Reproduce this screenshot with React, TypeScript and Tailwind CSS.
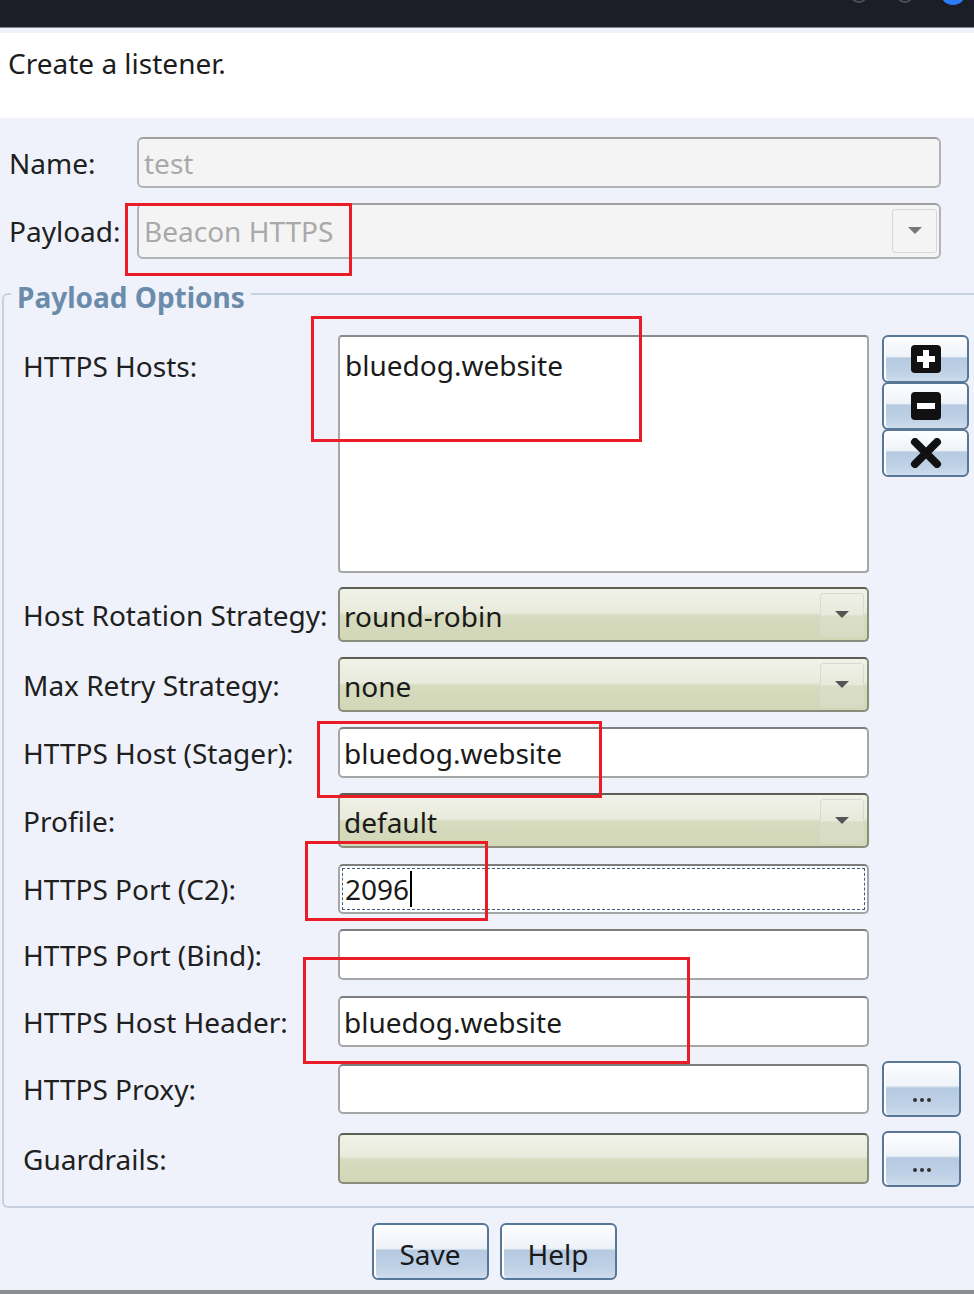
import React from "react";

const Label = ({ text }: { text: string }) => (
  <div className="w-[315px] shrink-0 whitespace-nowrap text-[28px] leading-[38px] text-[#202020]">{text}</div>
);

const Arrow = ({ color = "#555" }: { color?: string }) => (
  <svg width="14" height="8" viewBox="0 0 14 8">
    <path d="M0 0 L14 0 L7 7 Z" fill={color} />
  </svg>
);

const TextBox = ({ value, h = 51, focused = false }: { value?: string; h?: number; focused?: boolean }) => (
  <div
    className="w-[531px] shrink-0 rounded-[5px] border-2 border-[#a6a6a6] border-t-[#7e7e7e] bg-white p-[2px]"
    style={{ height: h }}
  >
    <div
      className={
        "flex h-full items-center pl-[2px] text-[28px] text-[#1a1a1a] " +
        (focused ? "border border-dashed border-[#3d5f86]" : "")
      }
    >
      {value}
      {focused && <span className="ml-[1px] h-[36px] w-[2px] bg-black" />}
    </div>
  </div>
);

const Combo = ({ value, arrow = true, h = 55 }: { value?: string; arrow?: boolean; h?: number }) => (
  <div
    className="flex w-[531px] shrink-0 items-center rounded-[5px] border-2 border-[#8a8c7c] border-t-[#5d5f55] bg-[linear-gradient(to_bottom,#f1f2e8_0%,#e9ebdd_46%,#d7dbbf_52%,#d2d7b7_100%)] pl-[4px] pr-[3px]"
    style={{ height: h }}
  >
    <span className="flex-1 pt-[2px] text-[28px] text-[#1a1a1a]">{value}</span>
    {arrow && (
      <div className="flex h-[44px] w-[44px] items-center justify-center rounded-[3px] border border-[#d9dbcc] bg-[linear-gradient(to_bottom,#eff0e6_0%,#e7e9dc_50%,#dadec6_52%,#d7dbc2_100%)]">
        <Arrow />
      </div>
    )}
  </div>
);

const BlueBtn = ({ w, h, children, className = "" }: { w: number; h: number; children?: React.ReactNode; className?: string }) => (
  <div
    className={
      "flex shrink-0 items-center justify-center rounded-[6px] border-2 border-[#587797] bg-[linear-gradient(to_bottom,#fdfeff_0%,#eef3f9_44%,#b5cae1_48%,#bfd1e6_80%,#cddcec_100%)] shadow-[inset_2px_0_0_#ffffff] " +
      className
    }
    style={{ width: w, height: h }}
  >
    {children}
  </div>
);

const Dots = () => (
  <div className="mt-[22px] flex gap-[3px]">
    <span className="h-[4px] w-[4px] rounded-full bg-[#333]" />
    <span className="h-[4px] w-[4px] rounded-full bg-[#333]" />
    <span className="h-[4px] w-[4px] rounded-full bg-[#333]" />
  </div>
);

const RedBox = ({ l, t, w, h }: { l: number; t: number; w: number; h: number }) => (
  <div className="pointer-events-none absolute border-[3px] border-[#ea1d27]" style={{ left: l, top: t, width: w, height: h }} />
);

export default function App() {
  return (
    <div className="relative h-[1294px] w-[974px] overflow-hidden bg-[#eff2fa] font-['Noto_Sans',sans-serif]">
      {/* window title bar */}
      <div className="flex h-[28px] items-start justify-end border-b border-[#7f848e] bg-[#1b1e26] pr-[8px]">
        <span className="-mt-[15px] mr-[28px] h-[18px] w-[18px] rounded-full border-2 border-[#4b4f58]" />
        <span className="-mt-[15px] mr-[26px] h-[18px] w-[18px] rounded-full border-2 border-[#4b4f58]" />
        <span className="-mt-[21px] h-[26px] w-[26px] rounded-full bg-[#2b7cf6]" />
      </div>
      <div className="h-[5px]" />
      <div className="h-[85px] bg-white pl-[8px] pt-[11px] text-[28px] leading-[38px] text-[#1c1c1c]">Create a listener.</div>

      {/* name / payload */}
      <div className="mt-[19px] flex h-[51px] items-center pl-[9px]">
        <div className="w-[128px] text-[28px] leading-[38px] text-[#202020]">Name:</div>
        <div className="flex h-[51px] w-[804px] items-center rounded-[6px] border-2 border-[#b3b3b3] border-t-[#a0a0a0] bg-[#f4f4f4] pl-[5px] text-[28px] text-[#a9a9a9]">
          test
        </div>
      </div>
      <div className="mt-[15px] flex h-[56px] items-center pl-[9px]">
        <div className="w-[128px] text-[28px] leading-[38px] text-[#202020]">Payload:</div>
        <div className="flex h-[56px] w-[804px] items-center rounded-[6px] border-2 border-[#b3b3b3] border-t-[#a0a0a0] bg-[#f4f4f4] pl-[5px] pr-[2px] text-[28px] text-[#a9a9a9]">
          <span className="flex-1">Beacon HTTPS</span>
          <div className="flex h-[44px] w-[45px] items-center justify-center rounded-[3px] border border-[#d8d8d8]">
            <Arrow color="#777" />
          </div>
        </div>
      </div>

      {/* payload options group */}
      <fieldset className="mt-[16px] ml-[2px] w-[990px] rounded-bl-[6px] rounded-tl-[6px] border-2 border-[#c8d2de] pb-[22px] pl-[19px]">
        <legend className="ml-[-12px] px-[6px] text-[28px] font-bold leading-[38px] text-[#6b8bab]">
          <span className="relative top-[3px]">Payload Options</span>
        </legend>

        <div className="mt-[22px] flex items-start">
          <div className="pt-[12px]">
            <Label text="HTTPS Hosts:" />
          </div>
          <div className="h-[238px] w-[531px] shrink-0 rounded-[4px] border-2 border-[#a6a6a6] border-t-[#8a8a8a] bg-white pl-[5px] pt-[9px] text-[28px] leading-[38px] text-[#1a1a1a]">
            bluedog.website
          </div>
          <div className="ml-[13px] flex flex-col">
            <BlueBtn w={87} h={48}>
              <svg width="30" height="28" viewBox="0 0 30 28">
                <rect x="0" y="0" width="30" height="28" rx="4" fill="#111" />
                <path d="M12 5 H18 V11 H24 V17 H18 V23 H12 V17 H6 V11 H12 Z" fill="#fff" />
              </svg>
            </BlueBtn>
            <BlueBtn w={87} h={48} className="-mt-[1px]">
              <svg width="30" height="28" viewBox="0 0 30 28">
                <rect x="0" y="0" width="30" height="28" rx="4" fill="#111" />
                <rect x="6" y="11" width="18" height="6" fill="#fff" />
              </svg>
            </BlueBtn>
            <BlueBtn w={87} h={48} className="-mt-[1px]">
              <svg width="32" height="30" viewBox="0 0 32 30">
                <path d="M5 4 L27 26 M27 4 L5 26" stroke="#111" strokeWidth="8" strokeLinecap="round" />
              </svg>
            </BlueBtn>
          </div>
        </div>

        <div className="mt-[14px] flex h-[55px] items-center">
          <Label text="Host Rotation Strategy:" />
          <Combo value="round-robin" />
        </div>
        <div className="mt-[15px] flex h-[55px] items-center">
          <Label text="Max Retry Strategy:" />
          <Combo value="none" />
        </div>
        <div className="mt-[15px] flex h-[51px] items-center">
          <Label text="HTTPS Host (Stager):" />
          <TextBox value="bluedog.website" />
        </div>
        <div className="mt-[15px] flex h-[55px] items-center">
          <Label text="Profile:" />
          <Combo value="default" />
        </div>
        <div className="mt-[16px] flex h-[50px] items-center">
          <Label text="HTTPS Port (C2):" />
          <TextBox value="2096" h={50} focused />
        </div>
        <div className="mt-[15px] flex h-[51px] items-center">
          <Label text="HTTPS Port (Bind):" />
          <TextBox />
        </div>
        <div className="mt-[16px] flex h-[51px] items-center">
          <Label text="HTTPS Host Header:" />
          <TextBox value="bluedog.website" />
        </div>
        <div className="mt-[17px] flex h-[50px] items-center">
          <Label text="HTTPS Proxy:" />
          <TextBox h={50} />
          <BlueBtn w={79} h={56} className="ml-[13px]">
            <Dots />
          </BlueBtn>
        </div>
        <div className="mt-[19px] flex h-[51px] items-center">
          <Label text="Guardrails:" />
          <Combo h={51} arrow={false} />
          <BlueBtn w={79} h={56} className="ml-[13px]">
            <Dots />
          </BlueBtn>
        </div>
      </fieldset>

      {/* footer buttons */}
      <div className="mt-[15px] flex justify-center gap-[11px] pl-[14px]">
        <BlueBtn w={117} h={57}>
          <span className="pt-[4px] text-[28px] text-[#1a1a1a]">Save</span>
        </BlueBtn>
        <BlueBtn w={117} h={57}>
          <span className="pt-[4px] text-[28px] text-[#1a1a1a]">Help</span>
        </BlueBtn>
      </div>
      <div className="mt-[10px] h-[4px] bg-[#8b8e93]" />

      {/* annotation boxes */}
      <RedBox l={125} t={203} w={227} h={73} />
      <RedBox l={311} t={316} w={331} h={126} />
      <RedBox l={317} t={721} w={285} h={77} />
      <RedBox l={305} t={841} w={183} h={80} />
      <RedBox l={303} t={957} w={387} h={107} />
    </div>
  );
}
